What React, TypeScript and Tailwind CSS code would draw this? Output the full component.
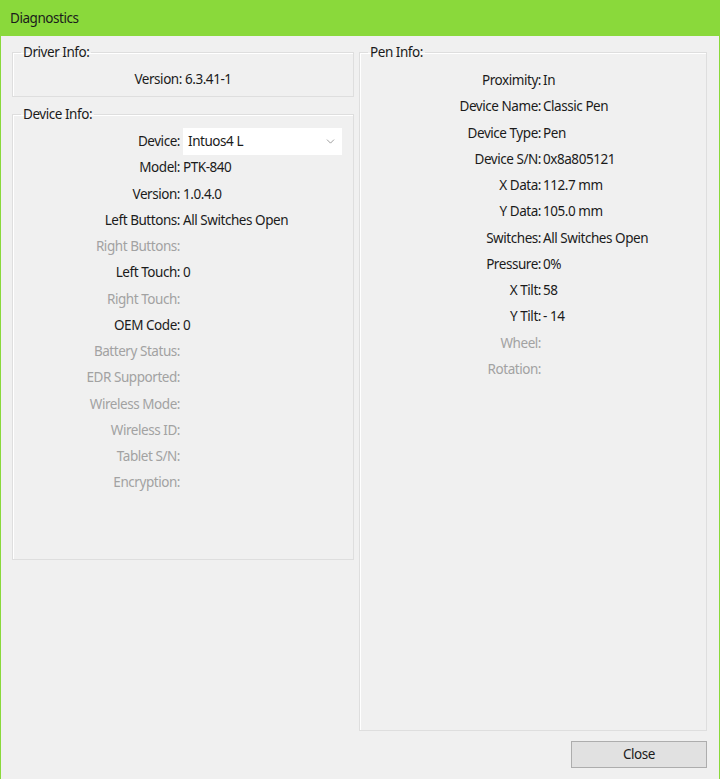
import { ChevronDown } from 'lucide-react';

type Row = { label: string; value?: string; disabled?: boolean };

const deviceRows: Row[] = [
  { label: 'Model:', value: 'PTK-840' },
  { label: 'Version:', value: '1.0.4.0' },
  { label: 'Left Buttons:', value: 'All Switches Open' },
  { label: 'Right Buttons:', disabled: true },
  { label: 'Left Touch:', value: '0' },
  { label: 'Right Touch:', disabled: true },
  { label: 'OEM Code:', value: '0' },
  { label: 'Battery Status:', disabled: true },
  { label: 'EDR Supported:', disabled: true },
  { label: 'Wireless Mode:', disabled: true },
  { label: 'Wireless ID:', disabled: true },
  { label: 'Tablet S/N:', disabled: true },
  { label: 'Encryption:', disabled: true },
];

const penRows: Row[] = [
  { label: 'Proximity:', value: 'In' },
  { label: 'Device Name:', value: 'Classic Pen' },
  { label: 'Device Type:', value: 'Pen' },
  { label: 'Device S/N:', value: '0x8a805121' },
  { label: 'X Data:', value: '112.7 mm' },
  { label: 'Y Data:', value: '105.0 mm' },
  { label: 'Switches:', value: 'All Switches Open' },
  { label: 'Pressure:', value: '0%' },
  { label: 'X Tilt:', value: '58' },
  { label: 'Y Tilt:', value: '- 14' },
  { label: 'Wheel:', disabled: true },
  { label: 'Rotation:', disabled: true },
];

function Group({ title, className, children }: { title: string; className: string; children: React.ReactNode }) {
  return (
    <fieldset className={`border border-[#dedede] shadow-[inset_1px_1px_0_#ffffff] ${className}`}>
      <legend className="ml-[8px] px-[2px] h-[20px] leading-[20px]">{title}</legend>
      {children}
    </fieldset>
  );
}

function InfoRow({ row }: { row: Row }) {
  return (
    <>
      <div className={`h-[26.25px] leading-[26.25px] text-right whitespace-nowrap ${row.disabled ? 'text-[#a2a2a2]' : ''}`}>
        {row.label}
      </div>
      <div className="h-[26.25px] leading-[26.25px] whitespace-nowrap">{row.value ?? ''}</div>
    </>
  );
}

export default function App() {
  return (
    <div className="w-[720px] h-[779px] bg-[#f0f0f0] border-x border-[#8ad93b] flex flex-col font-['Noto_Sans','Open_Sans',sans-serif] text-[13.5px] tracking-[-0.45px] text-[#1b1b1b]">
      {/* Title bar */}
      <div className="h-[36px] shrink-0 bg-[#8ad93b] flex items-center px-[9px]">Diagnostics</div>

      <div className="flex-1 flex gap-[5px] pl-[11px] pr-[12px] pt-[6px]">
        {/* Left column */}
        <div className="w-[342px] flex flex-col gap-[7px]">
          <Group title="Driver Info:" className="h-[55px]">
            <div className="h-[26px] mt-[4px] leading-[26px] text-center">Version: 6.3.41-1</div>
          </Group>

          <Group title="Device Info:" className="h-[456px]">
            <div className="grid grid-cols-[167px_1fr] gap-x-[3px] pt-[4px] pr-[11px]">
              <div className="h-[26.25px] leading-[26.25px] text-right">Device:</div>
              <div className="h-[26.25px] flex items-center">
                <div className="h-[27px] w-full bg-white flex items-center justify-between pl-[5px] pr-[5px]">
                  <span>Intuos4 L</span>
                  <ChevronDown className="w-[13px] h-[13px] text-[#707070]" strokeWidth={1.25} />
                </div>
              </div>
              {deviceRows.map((r) => (
                <InfoRow key={r.label} row={r} />
              ))}
            </div>
          </Group>
        </div>

        {/* Right column */}
        <div className="w-[348px] flex flex-col">
          <Group title="Pen Info:" className="h-[689px]">
            <div className="grid grid-cols-[181px_1fr] gap-x-[2px] pt-[5px]">
              {penRows.map((r) => (
                <InfoRow key={r.label} row={r} />
              ))}
            </div>
          </Group>
          <button className="mt-[10px] self-end w-[136px] h-[27px] bg-[#e1e1e1] border border-[#adadad] leading-[25px] text-center">
            Close
          </button>
        </div>
      </div>
    </div>
  );
}
